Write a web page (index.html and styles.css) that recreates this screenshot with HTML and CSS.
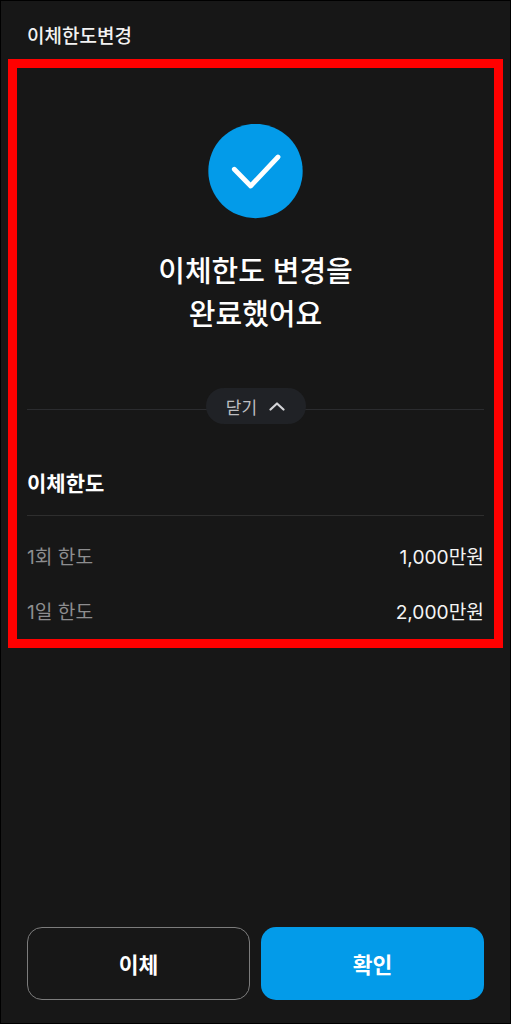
FILE: index.html
```
<!DOCTYPE html>
<html lang="ko">
<head>
<meta charset="utf-8">
<title>이체한도변경</title>
<link rel="stylesheet" href="styles.css">
</head>
<body>
<div class="page">
  <header class="topbar">이체한도변경</header>
  <section class="panel">
    <svg class="check" viewBox="0 0 95 95" width="95" height="95"><circle cx="47.500" cy="47" r="47.200" fill="#039be9"/><path d="M26.300 45.300 L42.700 62 L70 33" fill="none" stroke="#fff" stroke-width="4.800" stroke-linecap="round" stroke-linejoin="round"/></svg>
    <h1 class="headline">이체한도 변경을<br>완료했어요</h1>
    <div class="toggle-row">
      <button class="toggle"><span>닫기</span>
        <svg viewBox="0 0 16 9" width="16" height="9"><path d="M1.500 7.500 L8 1.500 L14.500 7.500" fill="none" stroke="#d4d5d8" stroke-width="2.200" stroke-linecap="round" stroke-linejoin="round"/></svg>
      </button>
    </div>
    <h2 class="sub">이체한도</h2>
    <div class="rows">
      <div class="row"><span class="label">1회 한도</span><span class="value">1,000만원</span></div>
      <div class="row"><span class="label">1일 한도</span><span class="value">2,000만원</span></div>
    </div>
  </section>
  <footer class="actions">
    <button class="btn outline">이체</button>
    <button class="btn primary">확인</button>
  </footer>
</div>
</body>
</html>
```
FILE: styles.css
```
* { box-sizing: border-box; }
html, body { margin: 0; padding: 0; }
body { background: #171717; font-family: Inter, "Noto Sans CJK KR", "Noto Sans", sans-serif; color: #fff; }
.page { width: 511px; height: 1024px; border: 1px solid #000; display: flex; flex-direction: column; background: #171717; }
.topbar { height: 58px; padding: 24px 0 0 26px; font-size: 19px; line-height: 24px; font-weight: 500; color: #f2f2f2; }
.panel { margin: 0 7px; height: 589px; border: 9px solid #f00; padding: 56px 10px 0; display: flex; flex-direction: column; }
.check { display: block; width: 95px; height: 95px; margin-left: 181px; flex: none; }
.headline { margin: 31px 0 0; font-size: 29px; line-height: 43px; font-weight: 500; text-align: center; color: #fff; }
.toggle-row { margin-top: 52px; height: 36px; display: flex; justify-content: center; background: linear-gradient(#2b2c2f, #2b2c2f) 0 21px / 100% 1px no-repeat; }
.toggle { width: 100px; height: 36px; border: 0; border-radius: 18px; background: #202226; color: #bdbec1; font: inherit; font-size: 17px; display: flex; align-items: center; justify-content: center; gap: 12px; padding: 0; }
.sub { margin: 43px 0 0; height: 49px; font-size: 21px; line-height: 34px; font-weight: 700; color: #fff; border-bottom: 1px solid #2e2e2e; }
.rows { padding-top: 12px; }
.row { display: flex; justify-content: space-between; align-items: center; height: 55px; font-size: 19.200px; }
.label { color: #8d8d8f; }
.value { color: #f4f4f4; }
.actions { margin-top: auto; padding: 0 26px 23px; display: grid; grid-template-columns: 1fr 1fr; gap: 11px; }
.btn { height: 73px; border-radius: 15px; font: inherit; font-size: 21.500px; font-weight: 700; color: #fff; padding: 0; }
.outline { background: transparent; border: 1px solid #7c7c7c; }
.primary { background: #039be9; border: 0; }
```
